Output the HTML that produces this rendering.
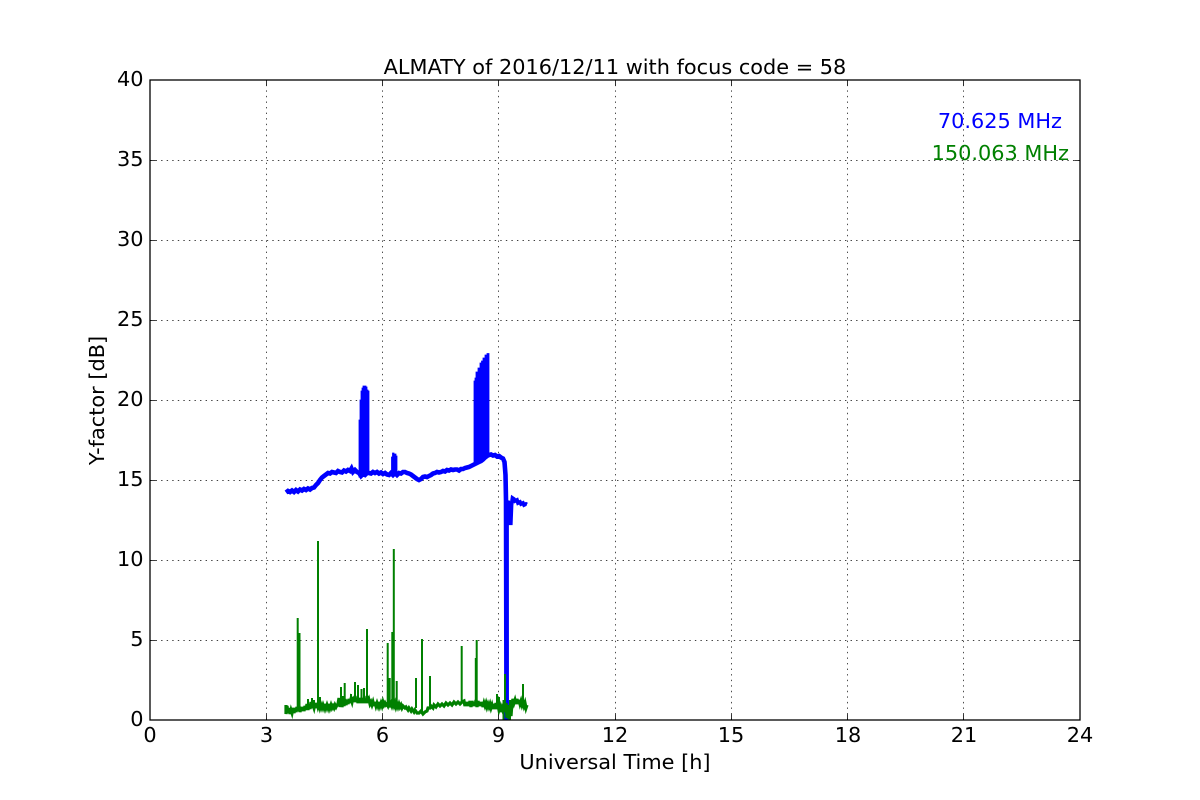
<!DOCTYPE html>
<html><head><meta charset="utf-8"><title>ALMATY Y-factor</title>
<style>
html,body{margin:0;padding:0;background:#fff;width:1200px;height:800px;overflow:hidden}
svg{display:block}
text{font-family:"DejaVu Sans",sans-serif;font-size:20.85px;fill:#000}
</style></head><body>
<svg width="1200" height="800" viewBox="0 0 1200 800" xmlns="http://www.w3.org/2000/svg">
<rect width="1200" height="800" fill="#fff"/>
<g stroke="#000" stroke-width=".7" stroke-dasharray="1.39 4.17" fill="none">
<path d="M266.5 720V80M382.5 720V80M498.5 720V80M615.5 720V80M731.5 720V80M847.5 720V80M963.5 720V80"/>
<path d="M150 640.5H1080M150 560.5H1080M150 480.5H1080M150 400.5H1080M150 320.5H1080M150 240.5H1080M150 160.5H1080"/>
</g>
<defs><clipPath id="c"><rect x="150" y="80" width="930" height="640"/></clipPath></defs>
<g clip-path="url(#c)">
<g fill="#00f" stroke="#00f" stroke-width=".8" stroke-linejoin="miter">
<path d="M359 477V420H360V400H361V391H362V388H363V386H366V387H367V390H368V391H369V473Z"/>
<path d="M391.5 474V457H392.5V453H394V454H396V456H397V474Z"/>
<path d="M474 463V381H475V378H476V372H478V368H480V363H481.5V361H483V358H485V355H487V353.5H489V456Z"/>
</g>
<path fill="none" stroke="#00f" stroke-width="4.6" stroke-linejoin="miter" d="M286 492.5L288 491L290 492L292 490.5L294 492L296 490L298 491.5L300 489.5L302 490.5L304 489L306 490L308 488.5L310 489.5L312 488L314 487.5L316 485L318 483L320 480L322 477.5L324 476L326 474.5L328 473L330 473.5L332 472L334 472.5L336 473L338 471L340 472L342 472.5L344 470.5L346 471.5L348 470L350 471L351.5 468.5L353 472L355 470L357 472L359 473L361 476L363 474L365 475L367 473L369 473L371 473.5L373 472L375 473L377 472L379 473.5L381 472.5L383 474L385 473L387 474.5L389 475L391 473L393 475L395 473L397 475L399 473L401 473.5L403 472L405 472L407 473L409 473.5L411 474.5L413 476L415 477.5L417 479L419 480L421 479L423 477L425 476.5L427 477L429 476L431 475L433 473.5L435 473L437 472L439 472.5L441 472L443 471L445 471.5L447 470L449 470.5L451 469.5L453 470L455 469.5L457 469.5L459 470.5L461 469L463 469L465 468L467 467.5L469 467L471 466L473 465L475 464L477 463L479 462L481 461L483 459.5L485 457.5L487 456L489 455L491 454.5L493 455.5L495 455L497 456.5L499 456L501 457.5L503 458.5L504.5 462L505.5 475L506 500L506.5 722"/>
<path fill="none" stroke="#00f" stroke-width="3.8" stroke-linejoin="miter" d="M507 722V512L508 501L509 505L510 503L510.7 525L511.5 505L512.5 498L514 499L515 501L517 500L518 503L520 502L521 504L523 503L524 505L526 504L527 504.5"/>
<path fill="none" stroke="#00f" stroke-width="3" d="M507 500V720"/>
<path fill="none" stroke="#008000" stroke-width="3.2" stroke-linejoin="miter" d="M286 705V714L287 706L288 713L289 708L290 714L291 710L292 713L293 708L294 713L295 708L296 712L297 707L298 711L299 706L300 712L301 707L302 711L303 707L304 711L305 706L306 710L307 704L308 710L309 704L310 709L311 702L312 708L313 705L314 708L315 703L316 708L317 703L318 707L319 704L320 708L321 705L322 708L323 705L324 708L325 704L326 708L327 705L328 708L329 704L330 708L331 705L332 708L333 706L334 708L335 705L336 707L337 705L338 704L339 698L340 707L341 701L342 707L343 702L344 706L345 699L346 705L347 700L348 704L349 699L350 703L351 699L352 702L353 697L354 702L355 696L356 702L357 698L358 703L359 698L360 703L361 698L362 703L363 698L364 703L365 699L366 703L367 696L368 703L369 700L370 704L371 702L372 705L373 702L374 706L375 702L376 706L377 703L378 706L379 702L380 706L381 703L382 706L383 702L384 705L385 703L386 705L387 704L388 706L389 703L390 705L391 703L392 706L393 703L394 706L395 703L396 707L397 704L398 707L399 704L400 707L401 705L402 708L403 706L405 708L406 707L408 710L409 708L411 711L412 709L414 712L415 710L417 713L419 713L421 711L423 714L425 712L427 711L428 708L430 708L431 706L433 708L434 705L436 707L438 704L440 706L442 704L444 706L446 703L448 705L450 703L452 705L454 702L456 704L458 702L460 704L462 702L464 701L465 706L466 702L467 706L468 702L469 706L470 701L471 707L472 701L473 706L474 702L475 706L476 700L477 707L478 701L479 706L480 702L481 706L482 702L483 707L484 703L485 706L486 703L487 707L488 704L489 707L490 704L491 708L492 705L493 709L494 704L495 709L496 703L497 709L498 705L499 710L500 707L501 712L502 708L503 711L504 706L505 712L506 703L507 718L508 705L509 719L510 712L511 716L512 703L513 699L514 703L515 700L516 704L517 699L518 704L519 700L520 704L521 701L522 705L523 702L524 706L525 703L526 708L527 705"/>
<path fill="none" stroke="#008000" stroke-width="2" d="M297.7 710V618M299.5 710V633M318 708V541M320 705V697M341 706V687M343 706V696M344.7 704V683M351 703V694M355 700V682M358 700V685M361.5 702V689M364 702V688M367 702V629M387.7 703V643M389.7 703V678M392.3 703V632M393.8 703V549M396.7 703V681M416 708V678M422 712V639M430 706V676M461.7 702V646M476.7 704V640M475.8 704V658M497 706V694M499 706V697M505 704V674M523 704V684M510 700V722M503.5 700V722M308 706V699M312 706V698M314 706V700"/>
</g>
<rect x="150" y="80" width="930" height="640" fill="none" stroke="#000" stroke-width="1.3"/>
<g stroke="#000" stroke-width=".8" fill="none">
<path d="M266.5 720v-5.5M382.5 720v-5.5M498.5 720v-5.5M615.5 720v-5.5M731.5 720v-5.5M847.5 720v-5.5M963.5 720v-5.5"/>
<path d="M266.5 80v5.5M382.5 80v5.5M498.5 80v5.5M615.5 80v5.5M731.5 80v5.5M847.5 80v5.5M963.5 80v5.5"/>
<path d="M150 640.5h5.5M150 560.5h5.5M150 480.5h5.5M150 400.5h5.5M150 320.5h5.5M150 240.5h5.5M150 160.5h5.5"/>
<path d="M1080 640.5h-5.5M1080 560.5h-5.5M1080 480.5h-5.5M1080 400.5h-5.5M1080 320.5h-5.5M1080 240.5h-5.5M1080 160.5h-5.5"/>
</g>
<text x="615" y="74" text-anchor="middle">ALMATY of 2016/12/11 with focus code = 58</text>
<g text-anchor="middle">
<text x="150" y="742">0</text><text x="266.5" y="742">3</text><text x="382.5" y="742">6</text><text x="498.5" y="742">9</text><text x="615" y="742">12</text><text x="731" y="742">15</text><text x="848" y="742">18</text><text x="964" y="742">21</text><text x="1080" y="742">24</text>
<text x="615" y="769">Universal Time [h]</text>
<text transform="translate(104 400.5) rotate(-90)">Y-factor [dB]</text>
</g>
<g text-anchor="end">
<text x="143.5" y="726">0</text><text x="143.5" y="646">5</text><text x="143.5" y="566">10</text><text x="143.5" y="486">15</text><text x="143.5" y="406">20</text><text x="143.5" y="326">25</text><text x="143.5" y="246">30</text><text x="143.5" y="166">35</text><text x="143.5" y="86">40</text>
</g>
<text x="1062" y="128" text-anchor="end" style="fill:#00f">70.625 MHz</text>
<text x="1069" y="160" text-anchor="end" style="fill:#008000">150.063 MHz</text>
</svg>
</body></html>
